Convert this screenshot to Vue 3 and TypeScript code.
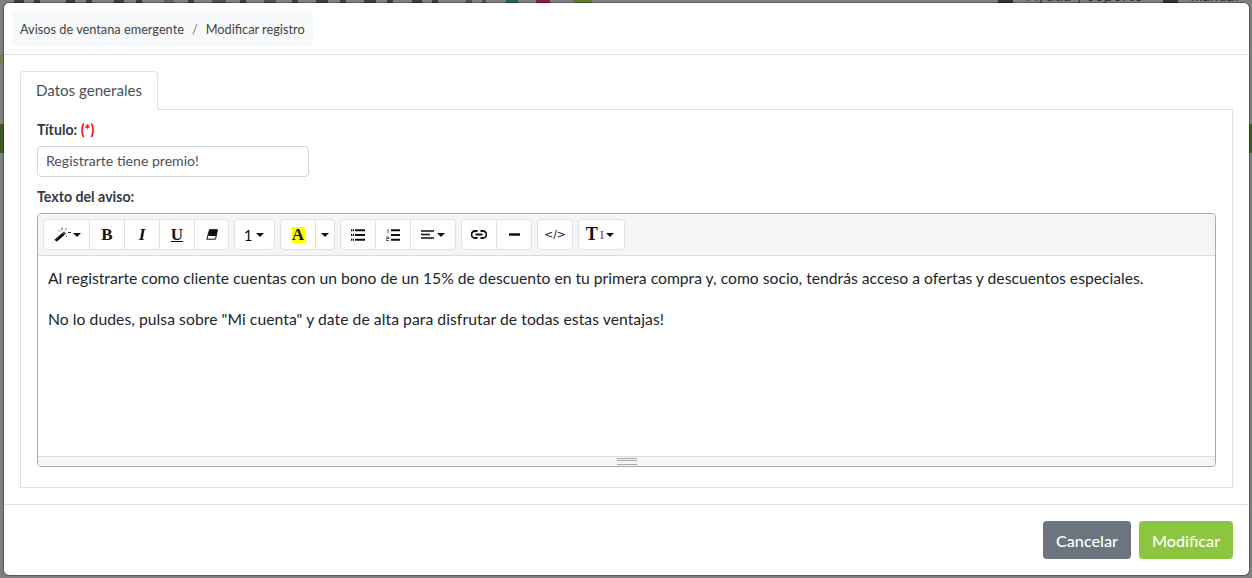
<script setup lang="ts">
interface Stub { w: number; gap: number; color: string }
const dark = '#3d3d3d'
const marks: [number, number, string][] = [
  [14, 24, dark], [34, 40, dark], [66, 75, dark], [86, 92, dark], [114, 124, dark], [136, 142, dark],
  [164, 174, '#606060'], [188, 194, dark], [212, 226, '#505050'], [240, 246, dark], [264, 276, '#505050'],
  [292, 298, dark], [316, 328, dark], [340, 346, dark], [364, 376, dark], [387, 393, dark],
  [412, 422, dark], [432, 438, dark], [466, 472, '#505050'], [482, 486, '#505050'],
  [506, 518, '#1d6b35'], [536, 550, '#8a2030'], [574, 592, '#5e7a2a'],
]
let prev = 0
const stubs: Stub[] = marks.map(([a, b, color]) => {
  const s = { w: b - a, gap: a - prev, color }
  prev = b
  return s
})
</script>

<template>
  <div class="page">
    <div class="backdrop" aria-hidden="true">
      <div class="top-strip">
        <span
          v-for="(s, i) in stubs"
          :key="i"
          class="stub"
          :style="{ width: s.w + 'px', marginLeft: s.gap + 'px', background: s.color }"
        ></span>
        <span class="spacer"></span>
        <span class="stub icon-a"></span>
        <span class="stub-text t1">Ayuda y soporte</span>
        <span class="stub icon-b"></span>
        <span class="stub-text t2">manual</span>
      </div>
      <div class="edge-c"></div>
      <div class="green-band left"></div>
      <div class="green-band right"></div>
    </div>
    <div class="modal">
      <header class="modal-head">
        <nav class="crumbs">
          <span>Avisos de ventana emergente</span>
          <span class="sep">/</span>
          <span>Modificar registro</span>
        </nav>
      </header>
      <main class="modal-body">
        <div class="tabs"><div class="tab">Datos generales</div></div>
        <section class="panel">
          <label class="lbl">Título: <span class="req">(*)</span></label>
          <div class="input">Registrarte tiene premio!</div>
          <label class="lbl second">Texto del aviso:</label>
          <div class="editor">
            <div class="toolbar">
              <div class="group">
                <button class="b w47 first-b">
                  <svg width="18" height="15" viewBox="0 0 18 15">
                    <path d="M0.500 12.700L8.500 5.800L10.600 7.900L2.700 14.800z" fill="#111"/>
                    <path d="M8.500 5.800L10 4.500L12 6.500L10.600 7.900z" fill="#444"/>
                    <path d="M8 0.500v3M4.500 3l1.500 1.500M12.500 1.500l-1.500 1.500M12 9l1 1" stroke="#6b5a40" stroke-width="1" fill="none"/>
                    <path d="M14 5.500h3" stroke="#333" stroke-width="1"/>
                  </svg>
                  <i class="caret"></i>
                </button>
                <button class="b w35 serif">B</button>
                <button class="b w35 serif it">I</button>
                <button class="b w35 serif und">U</button>
                <button class="b w34">
                  <svg width="12" height="11" viewBox="0 0 12 11"><path d="M3.500 0.700H11.500L9.500 10.200H.8z" fill="#fff" stroke="#111" stroke-width="1"/><path d="M3.500 0.700H11.500L10.200 7H2.100z" fill="#111"/></svg>
                </button>
              </div>
              <div class="group"><button class="b w41 num">1<i class="caret"></i></button></div>
              <div class="group">
                <button class="b w36 serif"><span class="hl">A</span></button>
                <button class="b w19"><i class="caret"></i></button>
              </div>
              <div class="group">
                <button class="b w36">
                  <svg width="14" height="12" viewBox="0 0 14 12"><path d="M4 1.200h10M4 6h10M4 10.800h10" stroke="#111" stroke-width="2"/><path d="M0 1.200h3M0 6h3M0 10.800h3" stroke="#111" stroke-width="2" stroke-dasharray="1.200 .6"/></svg>
                </button>
                <button class="b w35">
                  <svg width="14" height="12" viewBox="0 0 14 12"><path d="M5 1.200h9M5 6h9M5 10.800h9" stroke="#111" stroke-width="2"/><path d="M2 0v4" stroke="#a33" stroke-width="1"/><path d="M0 8h3v1.500H0V11.500h3.300" stroke="#335" stroke-width=".8" fill="none"/></svg>
                </button>
                <button class="b w45">
                  <svg width="13" height="9" viewBox="0 0 13 9"><path d="M0 1h13M0 4.500h9M0 8h13" stroke="#111" stroke-width="1.500"/></svg>
                  <i class="caret"></i>
                </button>
              </div>
              <div class="group">
                <button class="b w36">
                  <svg width="16" height="9" viewBox="0 0 16 9"><path d="M6.500 1H4a3.500 3.500 0 0 0 0 7h2.500M9.500 1H12a3.500 3.500 0 0 1 0 7H9.500M4.500 4.500h7" stroke="#111" stroke-width="1.800" fill="none"/></svg>
                </button>
                <button class="b w35">
                  <svg width="11" height="3" viewBox="0 0 11 3"><path d="M0 1.500h11" stroke="#111" stroke-width="2.400"/></svg>
                </button>
              </div>
              <div class="group"><button class="b w36 code">&lt;/&gt;</button></div>
              <div class="group">
                <button class="b w47 serif tt">T<span class="cursor">I</span><i class="caret"></i></button>
              </div>
            </div>
            <div class="content">
              <p>Al registrarte como cliente cuentas con un bono de un 15% de descuento en tu primera compra y, como socio, tendrás acceso a ofertas y descuentos especiales.</p>
              <p class="second-p">No lo dudes, pulsa sobre "Mi cuenta" y date de alta para disfrutar de todas estas ventajas!</p>
            </div>
            <div class="resizer"><span class="grip"></span></div>
          </div>
        </section>
      </main>
      <footer class="modal-foot">
        <button class="btn grey">Cancelar</button>
        <button class="btn green">Modificar</button>
      </footer>
    </div>
  </div>
</template>

<style>
html, body { margin: 0; padding: 0; background: #808080; overflow: hidden; }
</style>

<style scoped>
.page {
  position: relative;
  width: 1252px;
  height: 578px;
  overflow: hidden;
  background: #808080;
  font-family: Lato, "Open Sans", sans-serif;
  color: #212529;
}
.backdrop { position: absolute; inset: 0; }
.top-strip {
  display: flex;
  align-items: flex-start;
  height: 3px;
  overflow: hidden;
}
.stub { flex: none; height: 3px; }
.spacer { flex: 1; }
.icon-a { width: 15px; background: #333; }
.icon-b { width: 15px; background: #333; margin-left: 21px; }
.stub-text {
  flex: none;
  line-height: 18px;
  margin-top: -14px;
  color: #333;
}
.t1 { font-size: 16.300px; margin-left: 14px; }
.t2 { font-size: 15px; margin-left: 12px; margin-right: 14px; }
.edge-c {
  position: absolute;
  left: 0;
  top: 55px;
  width: 4px;
  height: 8px;
  box-sizing: border-box;
  border: 1px solid #5f7f33;
  border-radius: 4px;
}
.green-band { position: absolute; top: 124px; height: 29px; background: #3f5a20; }
.green-band.left { left: 0; width: 4px; }
.green-band.right { left: 1249px; width: 3px; }
.modal {
  position: absolute;
  left: 4px;
  top: 3px;
  width: 1245px;
  height: 572px;
  background: #fff;
  border-radius: 5px;
  box-shadow: 0 0 0 1px rgba(0, 0, 0, 0.3);
  display: flex;
  flex-direction: column;
}
.modal-head {
  height: 52px;
  box-sizing: border-box;
  border-bottom: 1px solid #dee2e6;
  padding: 8px 8px 0;
}
.crumbs {
  display: inline-flex;
  align-items: center;
  height: 35px;
  padding: 0 8px;
  background: #f8f9fa;
  border-radius: 4px;
  font-size: 12.750px;
  color: #3f4449;
}
.sep { margin: 0 8px; color: #6c757d; }
.modal-body { flex: 1; padding: 16px; display: flex; flex-direction: column; }
.tabs { height: 39px; display: flex; }
.tab {
  box-sizing: border-box;
  width: 138px;
  height: 39px;
  border: 1px solid #dee2e6;
  border-bottom: 0;
  border-radius: 4px 4px 0 0;
  background: #fff;
  font-size: 15.100px;
  line-height: 36px;
  text-align: center;
  color: #495057;
  position: relative;
  z-index: 1;
}
.panel {
  box-sizing: border-box;
  height: 379px;
  margin-top: -1px;
  border: 1px solid #dee2e6;
  padding: 12px 16px 0;
}
.lbl { display: block; font-size: 14.200px; font-weight: 700; line-height: 16px; color: #343a40; }
.lbl.second { margin-top: 12px; }
.req { color: #f00; }
.input {
  box-sizing: border-box;
  width: 272px;
  height: 31px;
  margin-top: 8px;
  border: 1px solid #ced4da;
  border-radius: 4px;
  padding: 0 8px;
  font-size: 14.100px;
  line-height: 28px;
  color: #495057;
}
.editor {
  box-sizing: border-box;
  margin-top: 8px;
  height: 254px;
  border: 1px solid #a9a9a9;
  border-radius: 4px;
  display: flex;
  flex-direction: column;
  overflow: hidden;
}
.toolbar {
  box-sizing: border-box;
  height: 42px;
  flex: none;
  display: flex;
  gap: 5px;
  padding: 5px 0 0 5px;
  background: #f5f5f5;
  border-bottom: 1px solid #ddd;
}
.group { display: flex; height: 31px; }
.b {
  box-sizing: border-box;
  height: 31px;
  padding: 0;
  border: 1px solid #dee2e6;
  border-left-width: 0;
  background: #fff;
  display: flex;
  align-items: center;
  justify-content: center;
  gap: 3px;
  color: #111;
  font-family: Lato, sans-serif;
}
.b:first-child { border-left-width: 1px; border-radius: 4px 0 0 4px; }
.b:last-child { border-radius: 0 4px 4px 0; }
.b:only-child { border-radius: 4px; }
.w19 { width: 19px; }
.w34 { width: 34px; }
.w35 { width: 35px; }
.w36 { width: 36px; }
.w41 { width: 41px; }
.w45 { width: 45px; }
.w47 { width: 47px; }
.caret {
  display: inline-block;
  width: 0;
  height: 0;
  border-left: 4px solid transparent;
  border-right: 4px solid transparent;
  border-top: 4px solid #111;
}
.first-b { gap: 1px; padding-left: 2px; }
.serif { font-family: "Liberation Serif", serif; font-size: 17px; font-weight: 700; }
.it { font-style: italic; }
.und { text-decoration: underline; }
.num { font-size: 15px; font-weight: 400; gap: 4px; padding-right: 1px; }
.hl { background: #ff0; line-height: 16px; width: 13px; display: block; text-align: center; font-size: 17px; }
.code { font-size: 11px; font-weight: 400; font-family: "DejaVu Sans", sans-serif; }
.tt { font-size: 18px; gap: 0; padding-right: 3px; }
.cursor { font-size: 13px; font-weight: 400; color: #7a3b5c; margin: 0 2px; }
.content {
  flex: 1;
  padding: 12px 10px 0;
  font-size: 15.690px;
  line-height: 20px;
  color: #212529;
}
.content p { margin: 0 0 21px; }
.content .second-p { letter-spacing: 0.055px; }
.resizer {
  height: 10px;
  flex: none;
  box-sizing: border-box;
  background: #f5f5f5;
  border-top: 1px solid #ddd;
  display: flex;
  align-items: center;
  justify-content: center;
}
.grip {
  display: block;
  width: 20px;
  height: 5px;
  border-top: 1px solid #a9a9a9;
  border-bottom: 1px solid #a9a9a9;
  background: linear-gradient(#a9a9a9, #a9a9a9) 0 1px / 100% 1px no-repeat;
}
.modal-foot {
  box-sizing: border-box;
  height: 71px;
  border-top: 1px solid #dee2e6;
  padding: 16px 16px 0 0;
  display: flex;
  justify-content: flex-end;
  gap: 8px;
}
.btn {
  height: 38px;
  padding: 0;
  border: 0;
  border-radius: 4px;
  color: #fff;
  font-family: Lato, sans-serif;
  font-size: 16.200px;
  font-weight: 500;
}
.grey { width: 88px; background: #6c757d; }
.green { width: 94px; background: #8cc63f; }
</style>
